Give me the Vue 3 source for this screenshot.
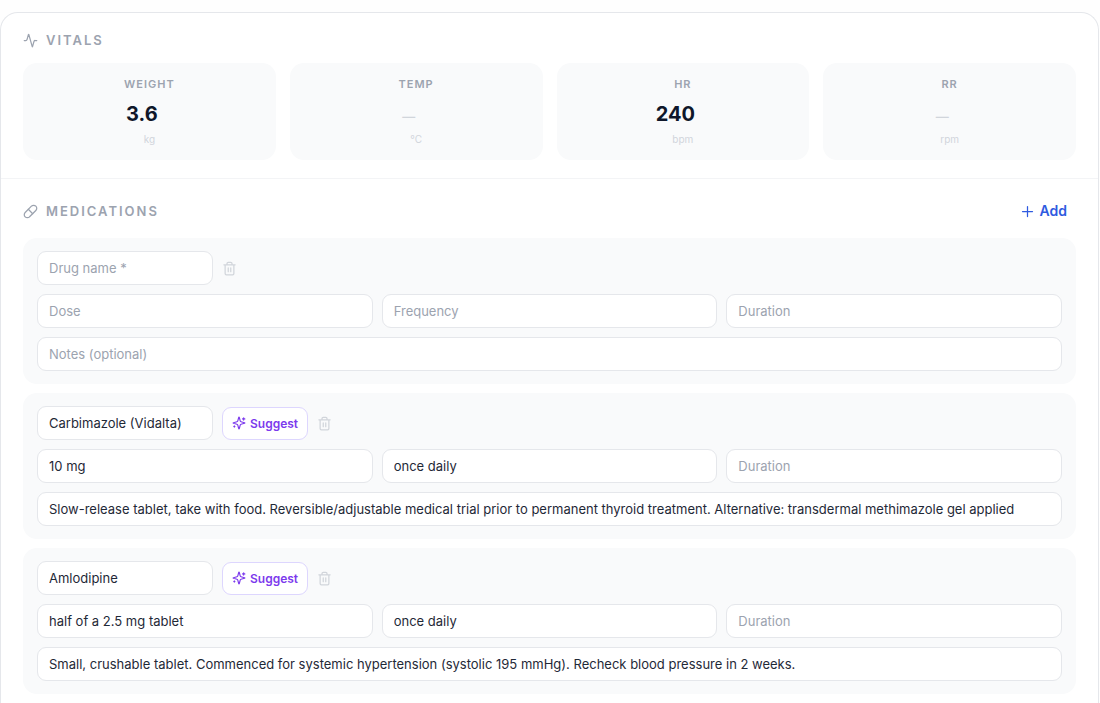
<script setup>
import { ref } from 'vue'

const vitals = ref([
  { id: 'weight', label: 'Weight', value: 3.6, unit: 'kg' },
  { id: 'temp', label: 'Temp', value: '', unit: '°C' },
  { id: 'hr', label: 'HR', value: 240, unit: 'bpm' },
  { id: 'rr', label: 'RR', value: '', unit: 'rpm' }
])

const medications = ref([
  { id: 1, name: '', dose: '', frequency: '', duration: '', notes: '' },
  {
    id: 2,
    name: 'Carbimazole (Vidalta)',
    dose: '10 mg',
    frequency: 'once daily',
    duration: '',
    notes:
      'Slow-release tablet, take with food. Reversible/adjustable medical trial prior to permanent thyroid treatment. Alternative: transdermal methimazole gel applied'
  },
  {
    id: 3,
    name: 'Amlodipine',
    dose: 'half of a 2.5 mg tablet',
    frequency: 'once daily',
    duration: '',
    notes:
      'Small, crushable tablet. Commenced for systemic hypertension (systolic 195 mmHg). Recheck blood pressure in 2 weeks.'
  }
])

let nextId = 4
function addMedication() {
  medications.value.unshift({ id: nextId++, name: '', dose: '', frequency: '', duration: '', notes: '' })
}
function removeMedication(id) {
  medications.value = medications.value.filter((m) => m.id !== id)
}
</script>

<template>
  <main class="record">
    <section class="section vitals">
      <header class="section-head">
        <h2 class="title">
          <svg class="icon" viewBox="0 0 24 24" aria-hidden="true">
            <path d="M22 12h-2.48a2 2 0 0 0-1.93 1.46l-2.35 8.36a.25.25 0 0 1-.48 0L9.24 2.18a.25.25 0 0 0-.48 0l-2.35 8.36A2 2 0 0 1 4.49 12H2" />
          </svg>
          VITALS
        </h2>
      </header>
      <div class="tiles">
        <div v-for="v in vitals" :key="v.id" class="tile">
          <label class="tile-label" :for="v.id">{{ v.label }}</label>
          <input :id="v.id" v-model="v.value" class="tile-value" type="number" step="any" placeholder="—" />
          <span class="tile-unit">{{ v.unit }}</span>
        </div>
      </div>
    </section>

    <section class="section meds">
      <header class="section-head">
        <h2 class="title">
          <svg class="icon" viewBox="0 0 24 24" aria-hidden="true">
            <path d="m10.5 20.5 10-10a4.95 4.95 0 1 0-7-7l-10 10a4.95 4.95 0 1 0 7 7Z" />
            <path d="m8.5 8.5 7 7" />
          </svg>
          MEDICATIONS
        </h2>
        <button class="add" type="button" @click="addMedication">
          <svg class="icon" viewBox="0 0 24 24" aria-hidden="true"><path d="M4 12h16M12 4v16" /></svg>
          Add
        </button>
      </header>
      <div class="list">
        <article v-for="m in medications" :key="m.id" class="med">
          <div class="row">
            <input v-model="m.name" class="field name" type="text" placeholder="Drug name *" aria-label="Drug name" />
            <button v-if="m.name" class="suggest" type="button">
              <svg class="icon small" viewBox="0 0 24 24" aria-hidden="true">
                <path d="M9.937 15.5A2 2 0 0 0 8.5 14.063l-6.135-1.582a.5.5 0 0 1 0-.962L8.5 9.936A2 2 0 0 0 9.937 8.5l1.582-6.135a.5.5 0 0 1 .963 0L14.063 8.5A2 2 0 0 0 15.5 9.937l6.135 1.581a.5.5 0 0 1 0 .964L15.5 14.063a2 2 0 0 0-1.437 1.437l-1.582 6.135a.5.5 0 0 1-.963 0z" />
                <path d="M20 3v4M22 5h-4M4 17v2M5 18H3" />
              </svg>
              Suggest
            </button>
            <button class="remove" type="button" aria-label="Remove medication" @click="removeMedication(m.id)">
              <svg class="icon" viewBox="0 0 24 24" aria-hidden="true">
                <path d="M3 6h18M19 6v14a2 2 0 0 1-2 2H7a2 2 0 0 1-2-2V6M8 6V4a2 2 0 0 1 2-2h4a2 2 0 0 1 2 2v2M10 11v6M14 11v6" />
              </svg>
            </button>
          </div>
          <div class="triple">
            <input v-model="m.dose" class="field" type="text" placeholder="Dose" aria-label="Dose" />
            <input v-model="m.frequency" class="field" type="text" placeholder="Frequency" aria-label="Frequency" />
            <input v-model="m.duration" class="field" type="text" placeholder="Duration" aria-label="Duration" />
          </div>
          <input v-model="m.notes" class="field" type="text" placeholder="Notes (optional)" aria-label="Notes" />
        </article>
      </div>
    </section>
  </main>
</template>

<style>
body {
  background: #fefefe;
}
</style>

<style scoped>
.record,
.record * {
  box-sizing: border-box;
  font-family: Inter, "Liberation Sans", sans-serif;
}
.record {
  margin: 12px 1px 0 0;
  border: 1px solid #e5e7eb;
  border-bottom: 0;
  border-radius: 18px 18px 0 0;
  background: #fff;
}
.section {
  padding: 18px 22px;
}
.meds {
  border-top: 1px solid #f3f4f6;
  padding-bottom: 10px;
}
.section-head {
  display: flex;
  align-items: center;
  justify-content: space-between;
  height: 18px;
  margin-bottom: 14px;
}
.meds .section-head {
  height: 28px;
  margin-bottom: 13px;
}
.icon {
  display: block;
  flex: none;
  width: 15px;
  height: 15px;
  fill: none;
  stroke: currentColor;
  stroke-width: 2;
  stroke-linecap: round;
  stroke-linejoin: round;
}
.icon.small {
  width: 14px;
  height: 14px;
}
.title {
  display: flex;
  align-items: center;
  gap: 8px;
  margin: 0;
  font-size: 13px;
  line-height: 18px;
  font-weight: 600;
  letter-spacing: 2px;
  color: #9ca3af;
}
.add {
  display: flex;
  align-items: center;
  gap: 5px;
  padding: 4px 9px;
  border: 0;
  background: none;
  font-size: 14px;
  line-height: 20px;
  font-weight: 600;
  color: #2f5be0;
}
.tiles {
  display: grid;
  grid-template-columns: repeat(4, 1fr);
  gap: 14px;
}
.tile {
  display: flex;
  flex-direction: column;
  align-items: center;
  min-width: 0;
  padding: 13px;
  border-radius: 14px;
  background: #f9fafb;
}
.tile-label {
  font-size: 11px;
  line-height: 16px;
  font-weight: 600;
  letter-spacing: 1px;
  text-transform: uppercase;
  color: #9ca3af;
}
.tile-value {
  width: 100%;
  height: 28px;
  margin: 8px 0 4px;
  padding: 0;
  border: 0;
  outline: 0;
  background: none;
  font-size: 20px;
  font-weight: 700;
  text-align: center;
  color: #0f172a;
}
.tile-value::placeholder {
  font-size: 13px;
  font-weight: 600;
  color: #d1d5db;
}
.tile-unit {
  font-size: 10px;
  line-height: 15px;
  color: #d1d5db;
}
.list {
  display: flex;
  flex-direction: column;
  gap: 9px;
}
.med {
  display: flex;
  flex-direction: column;
  gap: 9px;
  padding: 13px 14px;
  border-radius: 14px;
  background: #f9fafb;
}
.row {
  display: flex;
  align-items: center;
  gap: 9px;
}
.triple {
  display: grid;
  grid-template-columns: repeat(3, 1fr);
  gap: 9px;
}
.field {
  width: 100%;
  min-width: 0;
  height: 34px;
  padding: 0 11px;
  border: 1px solid #e5e7eb;
  border-radius: 9px;
  outline: 0;
  background: #fff;
  font-size: 13px;
  color: #1f2937;
}
.field::placeholder {
  color: #9ca3af;
}
.name {
  width: 176px;
}
.suggest {
  display: flex;
  align-items: center;
  gap: 4px;
  height: 33px;
  padding: 0 9px;
  border: 1px solid #ddd6fe;
  border-radius: 9px;
  background: #fff;
  font-size: 12px;
  font-weight: 600;
  color: #7c3aed;
}
.remove {
  padding: 0;
  border: 0;
  background: none;
  color: #d1d5db;
}
</style>
